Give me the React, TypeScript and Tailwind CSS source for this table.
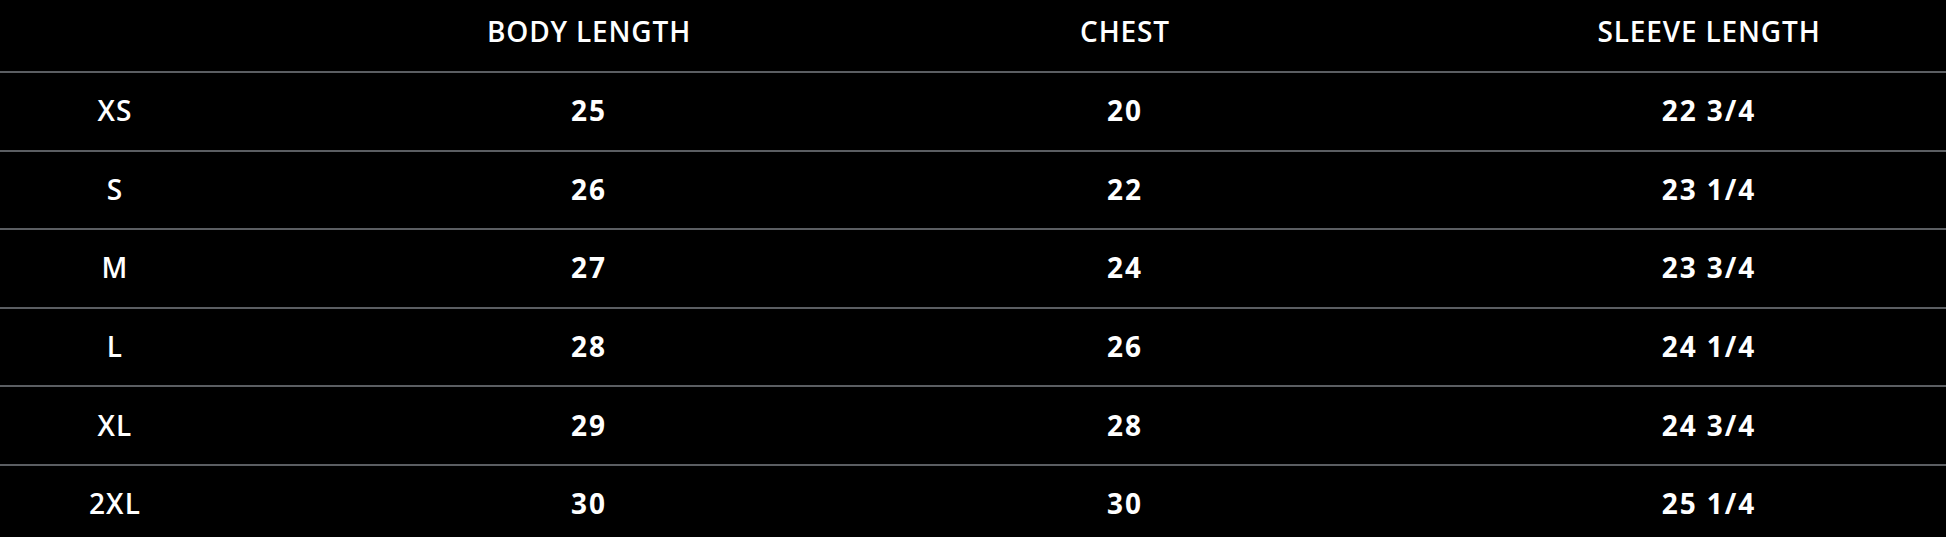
import React from "react";

const rows: [string, string, string, string][] = [
  ["XS", "25", "20", "22 3/4"],
  ["S", "26", "22", "23 1/4"],
  ["M", "27", "24", "23 3/4"],
  ["L", "28", "26", "24 1/4"],
  ["XL", "29", "28", "24 3/4"],
  ["2XL", "30", "30", "25 1/4"],
];

export default function App() {
  return (
    <div
      className="w-[1946px] h-[537px] overflow-hidden bg-black text-white"
      style={{ fontFamily: '"Open Sans", "Noto Sans", sans-serif' }}
    >
      <div className="grid grid-cols-[230px_718px_354px_1fr] h-[73px] border-b-2 border-[#5b5e62] items-center pb-[10px] text-[28px] font-semibold tracking-[0.03em]">
        <div />
        <div className="text-center">BODY LENGTH</div>
        <div className="text-center">CHEST</div>
        <div className="text-center pl-[170px]">SLEEVE LENGTH</div>
      </div>
      {rows.map((r) => (
        <div
          key={r[0]}
          className="grid grid-cols-[230px_718px_354px_1fr] h-[78.6px] border-b-2 border-[#5b5e62] items-center text-[28px] tracking-[0.07em] pb-[2px]"
        >
          <div className="text-center font-semibold tracking-[0.04em]">{r[0]}</div>
          <div className="text-center font-bold">{r[1]}</div>
          <div className="text-center font-bold">{r[2]}</div>
          <div className="text-center font-bold pl-[170px]">{r[3]}</div>
        </div>
      ))}
    </div>
  );
}
